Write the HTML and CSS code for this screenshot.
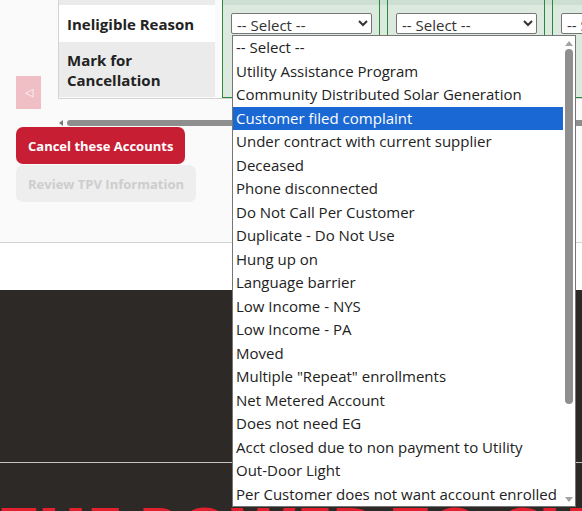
FILE: index.html
```html
<!DOCTYPE html>
<html lang="en">
<head>
    <meta charset="UTF-8">
    <meta name="viewport" content="width=device-width, initial-scale=1.0">
    <title>Cancel Accounts</title>
    <link rel="stylesheet" href="styles.css">
</head>
<body>

    <section class="accounts">
        <div class="table-area">
            <button class="scroll-left" type="button">&#9665;</button>
            <div class="table-scroll">
                <div class="grid">
                    <div class="labels">
                        <div class="row row-head"></div>
                        <div class="row row-reason">Ineligible Reason</div>
                        <div class="row row-mark">Mark for<br>Cancellation</div>
                    </div>
                    <div class="cols">
                        <div class="col">
                            <div class="row row-head"></div>
                            <div class="row row-reason">
                                <div class="select-wrap">
                                    <select class="reason"><option>-- Select --</option></select>
                                    <div class="dropdown">
                                        <ul class="options">
                                            <li>-- Select --</li>
                                            <li>Utility Assistance Program</li>
                                            <li>Community Distributed Solar Generation</li>
                                            <li class="active">Customer filed complaint</li>
                                            <li>Under contract with current supplier</li>
                                            <li>Deceased</li>
                                            <li>Phone disconnected</li>
                                            <li>Do Not Call Per Customer</li>
                                            <li>Duplicate - Do Not Use</li>
                                            <li>Hung up on</li>
                                            <li>Language barrier</li>
                                            <li>Low Income - NYS</li>
                                            <li>Low Income - PA</li>
                                            <li>Moved</li>
                                            <li>Multiple "Repeat" enrollments</li>
                                            <li>Net Metered Account</li>
                                            <li>Does not need EG</li>
                                            <li>Acct closed due to non payment to Utility</li>
                                            <li>Out-Door Light</li>
                                            <li>Per Customer does not want account enrolled</li>
                                        </ul>
                                        <div class="vbar">
                                            <span class="arrow-up"></span>
                                            <span class="vbar-thumb"></span>
                                            <span class="arrow-down"></span>
                                        </div>
                                    </div>
                                </div>
                            </div>
                            <div class="row row-mark"></div>
                        </div>
                        <div class="col">
                            <div class="row row-head"></div>
                            <div class="row row-reason">
                                <div class="select-wrap">
                                    <select class="reason"><option>-- Select --</option></select>
                                </div>
                            </div>
                            <div class="row row-mark"></div>
                        </div>
                        <div class="col">
                            <div class="row row-head"></div>
                            <div class="row row-reason">
                                <div class="select-wrap">
                                    <select class="reason"><option>-- Select --</option></select>
                                </div>
                            </div>
                            <div class="row row-mark"></div>
                        </div>
                    </div>
                </div>
                <div class="hbar">
                    <span class="arrow-left"></span>
                    <span class="hbar-thumb"></span>
                </div>
            </div>
        </div>

        <div class="actions">
            <button class="btn btn-red" type="button">Cancel these Accounts</button>
            <button class="btn btn-grey" type="button" disabled>Review TPV Information</button>
        </div>
    </section>

    <div class="divider"></div>

    <footer class="footer">
        <div class="footer-line"></div>
        <h2 class="footer-title">THE POWER TO CHOOSE</h2>
    </footer>

</body>
</html>
```

FILE: styles.css
```css
html, body {
    overflow-x: hidden;
}
body {
    margin: 0;
    background: #fafafa;
    font-family: "Open Sans", Arial, sans-serif;
    color: #222;
}
.accounts {
    padding: 0 0 40px 16px;
}
.table-area {
    display: flex;
    gap: 17px;
    margin-top: -31px;
}
.scroll-left {
    flex: none;
    width: 25px;
    height: 33px;
    align-self: flex-end;
    margin-bottom: 17px;
    padding: 0;
    border: none;
    background-color: #f0bfc5;
    color: #fff;
    font-size: 11px;
}
.table-scroll {
    flex: 1;
}
.grid {
    display: flex;
    border-bottom: 1px solid #d3d3d3;
}
.labels {
    flex: none;
    width: 157px;
    margin-right: 7px;
    border-left: 1px solid #d3d3d3;
    box-sizing: border-box;
    font-weight: 700;
    font-size: 15px;
}
.labels .row {
    display: flex;
    align-items: center;
    padding-left: 8px;
    line-height: 20px;
}
.row-head { height: 36px; }
.row-reason { height: 37px; }
.row-mark { height: 55px; }
.labels .row-head, .labels .row-mark { background-color: #ebebeb; }
.labels .row-reason { background-color: #fff; }

.cols {
    display: flex;
    gap: 7px;
    background: linear-gradient(#cddfd1 36px, #dce9de 36px);
}
.col {
    flex: none;
    width: 158px;
    box-sizing: border-box;
    border-left: 1px solid #2a8a3c;
    border-right: 1px solid #2a8a3c;
    border-bottom: 1px solid #2a8a3c;
}
.col .row-reason {
    padding: 8px 0 0 8px;
    box-sizing: border-box;
}
.select-wrap {
    position: relative;
    width: 141px;
}
.reason {
    display: block;
    width: 141px;
    height: 21px;
    padding: 0 0 0 1px;
    font-family: "Open Sans", Arial, sans-serif;
    font-size: 15px;
    line-height: 19px;
    color: #333;
    background-color: #fff;
    border: 1px solid #767676;
    border-radius: 2px;
}

/* open list of the first select */
.dropdown {
    position: absolute;
    top: 22px;
    left: 1px;
    z-index: 10;
    width: 344px;
    display: flex;
    background-color: #fff;
    border: 1px solid #767676;
    box-sizing: border-box;
}
.options {
    flex: 1;
    list-style: none;
    margin: 0;
    padding: 0;
    font-size: 15px;
    color: #222;
}
.options li {
    height: 23.5px;
    line-height: 23.5px;
    padding-left: 3px;
    white-space: nowrap;
}
.options li.active {
    background-color: #1a68d3;
    color: #fff;
}
.vbar {
    flex: none;
    width: 12px;
    display: flex;
    flex-direction: column;
    align-items: center;
    padding: 5px 0 4px;
}
.arrow-up {
    width: 0;
    height: 0;
    border-left: 4px solid transparent;
    border-right: 4px solid transparent;
    border-bottom: 5px solid #a3a3a3;
}
.vbar-thumb {
    width: 8px;
    height: 355px;
    margin-top: 3px;
    border-radius: 4px;
    background-color: #8f8f8f;
}
.arrow-down {
    margin-top: auto;
    width: 0;
    height: 0;
    border-left: 4px solid transparent;
    border-right: 4px solid transparent;
    border-top: 5px solid #a3a3a3;
}

.hbar {
    display: flex;
    align-items: center;
    height: 6px;
    margin-top: 21px;
    padding-left: 1px;
}
.arrow-left {
    width: 0;
    height: 0;
    border-top: 3px solid transparent;
    border-bottom: 3px solid transparent;
    border-right: 4px solid #777;
}
.hbar-thumb {
    flex: 1;
    height: 6px;
    margin-left: 4px;
    border-radius: 3px;
    background-color: #8e8e8e;
}

.actions {
    display: flex;
    flex-direction: column;
    align-items: flex-start;
    gap: 1px;
    margin-top: 1px;
}
.btn {
    height: 37px;
    padding: 0 12px;
    border: none;
    border-radius: 7px;
    font-family: "Open Sans", Arial, sans-serif;
    font-size: 13px;
    font-weight: 700;
}
.btn-red {
    background-color: #c81e33;
    color: #fff;
}
.btn-grey {
    background-color: #eeeeee;
    color: #cdcdcd;
}

.divider {
    height: 47px;
    border-top: 1px solid #d3d3d3;
    background-color: #fff;
}
.footer {
    background-color: #2d2926;
    padding-top: 172px;
    height: 120px;
    overflow: hidden;
}
.footer-line {
    height: 1px;
    background-color: #c4c4c4;
}
.footer-title {
    margin: 35px 0 0;
    font-size: 64px;
    line-height: 1;
    font-weight: 800;
    color: #e3202e;
    white-space: nowrap;
}
```
